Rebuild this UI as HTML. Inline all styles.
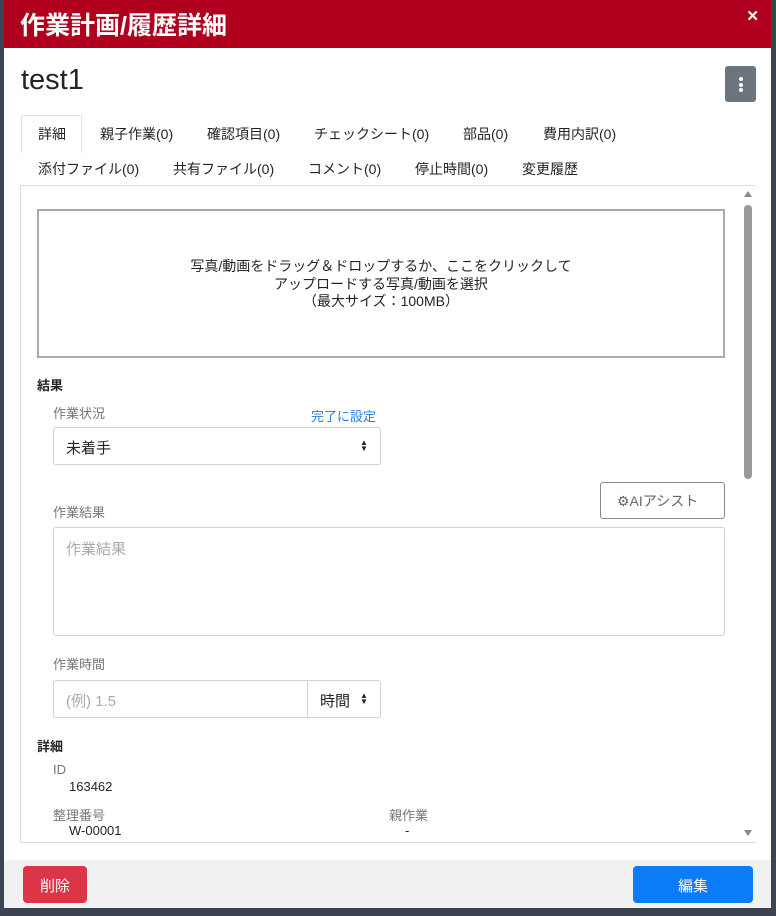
<!DOCTYPE html>
<html><head><meta charset="utf-8"><style>
*{box-sizing:border-box;margin:0;padding:0}
body{width:776px;height:916px;background:#3b4450;position:relative;overflow:hidden;font-family:"Liberation Sans","Noto Sans CJK JP",sans-serif;color:#212529}
.a{position:absolute}
.modal{left:4px;top:0;width:767px;height:908px;background:#fff}
.hdr{left:0;top:0;width:767px;height:48px;background:#b0001e;color:#fff;font-size:25px;font-weight:bold;padding:6px 0 0 16px}
.x{right:12px;top:7px;color:#fff;font-size:15px;font-weight:bold}
.t{font-size:14px;white-space:nowrap}
.lbl{font-size:13px;color:#777;white-space:nowrap}
.box{border:1px solid #ced4da;border-radius:3px;background:#fff}
</style></head><body>
<div class="a modal">
 <div class="a hdr">作業計画/履歴詳細</div>
 <div class="a x">✕</div>
 <div class="a" style="left:17px;top:64px;font-size:29px">test1</div>
 <div class="a" style="left:721px;top:66px;width:31px;height:36px;background:#6c757d;border-radius:3px">
  <div class="a" style="left:14px;top:11px;width:4px;height:4px;border-radius:2px;background:#fff"></div>
  <div class="a" style="left:14px;top:16.5px;width:4px;height:4px;border-radius:2px;background:#fff"></div>
  <div class="a" style="left:14px;top:22px;width:4px;height:4px;border-radius:2px;background:#fff"></div>
 </div>
 <div class="a" style="left:17px;top:115px;width:61px;height:38px;border:1px solid #e3e3e3;border-bottom:none;background:#fff"></div>
 <div class="a t" style="left:34px;top:124px">詳細</div>
 <div class="a t" style="left:96px;top:124px">親子作業(0)</div>
 <div class="a t" style="left:203px;top:124px">確認項目(0)</div>
 <div class="a t" style="left:310px;top:124px">チェックシート(0)</div>
 <div class="a t" style="left:459px;top:124px">部品(0)</div>
 <div class="a t" style="left:539px;top:124px">費用内訳(0)</div>
 <div class="a t" style="left:34px;top:159px">添付ファイル(0)</div>
 <div class="a t" style="left:169px;top:159px">共有ファイル(0)</div>
 <div class="a t" style="left:304px;top:159px">コメント(0)</div>
 <div class="a t" style="left:411px;top:159px">停止時間(0)</div>
 <div class="a t" style="left:518px;top:159px">変更履歴</div>
 <div class="a" style="left:16px;top:185px;width:736px;height:658px;border:1px solid #ddd;border-right:none"></div>
 <div class="a" style="left:740px;top:191px;width:0;height:0;border-left:4px solid transparent;border-right:4px solid transparent;border-bottom:6px solid #888"></div>
 <div class="a" style="left:740px;top:205px;width:8px;height:274px;background:#999;border-radius:4px"></div>
 <div class="a" style="left:740px;top:830px;width:0;height:0;border-left:4px solid transparent;border-right:4px solid transparent;border-top:6px solid #888"></div>
 <div class="a" style="left:33px;top:209px;width:688px;height:149px;border:2px solid #aaa"></div>
 <div class="a" style="left:33px;top:258px;width:688px;text-align:center;font-size:14px;line-height:17.5px">写真/動画をドラッグ＆ドロップするか、ここをクリックして<br>アップロードする写真/動画を選択<br>（最大サイズ：100MB）</div>
 <div class="a" style="left:33px;top:375px;font-size:13px;font-weight:bold">結果</div>
 <div class="a lbl" style="left:49px;top:403px">作業状況</div>
 <div class="a" style="left:307px;top:406px;font-size:13px;color:#2a7ed8">完了に設定</div>
 <div class="a box" style="left:49px;top:427px;width:328px;height:38px"></div>
 <div class="a t" style="left:62px;top:437px;font-size:15px">未着手</div>
 <div class="a" style="left:356px;top:440px;font-size:8px;line-height:6px">▲<br>▼</div>
 <div class="a" style="left:596px;top:482px;width:125px;height:37px;border:1px solid #888;border-radius:3px;font-size:14px;color:#666;padding:8px 0 0 16px">⚙AIアシスト</div>
 <div class="a lbl" style="left:49px;top:502px">作業結果</div>
 <div class="a box" style="left:49px;top:527px;width:672px;height:109px"></div>
 <div class="a" style="left:62px;top:538px;font-size:15px;color:#aaa">作業結果</div>
 <div class="a lbl" style="left:49px;top:654px">作業時間</div>
 <div class="a box" style="left:49px;top:680px;width:328px;height:38px"></div>
 <div class="a" style="left:303px;top:681px;width:1px;height:36px;background:#ced4da"></div>
 <div class="a" style="left:62px;top:690px;font-size:15px;color:#aaa">(例) 1.5</div>
 <div class="a t" style="left:316px;top:690px;font-size:15px">時間</div>
 <div class="a" style="left:356px;top:693px;font-size:8px;line-height:6px">▲<br>▼</div>
 <div class="a" style="left:33px;top:736px;font-size:13px;font-weight:bold">詳細</div>
 <div class="a lbl" style="left:49px;top:762px">ID</div>
 <div class="a" style="left:65px;top:779px;font-size:13px">163462</div>
 <div class="a lbl" style="left:49px;top:805px">整理番号</div>
 <div class="a" style="left:65px;top:823px;font-size:13px">W-00001</div>
 <div class="a lbl" style="left:385px;top:805px">親作業</div>
 <div class="a" style="left:401px;top:823px;font-size:13px">-</div>
 <div class="a" style="left:0;top:860px;width:767px;height:48px;background:#f2f1f2"></div>
 <div class="a" style="left:19px;top:866px;width:64px;height:37px;background:#dc3545;border-radius:4px;color:#fff;font-size:15px;text-align:center;padding-top:9px">削除</div>
 <div class="a" style="left:629px;top:866px;width:120px;height:37px;background:#0a7cf8;border-radius:4px;color:#fff;font-size:15px;text-align:center;padding-top:9px">編集</div>
</div>
</body></html>
